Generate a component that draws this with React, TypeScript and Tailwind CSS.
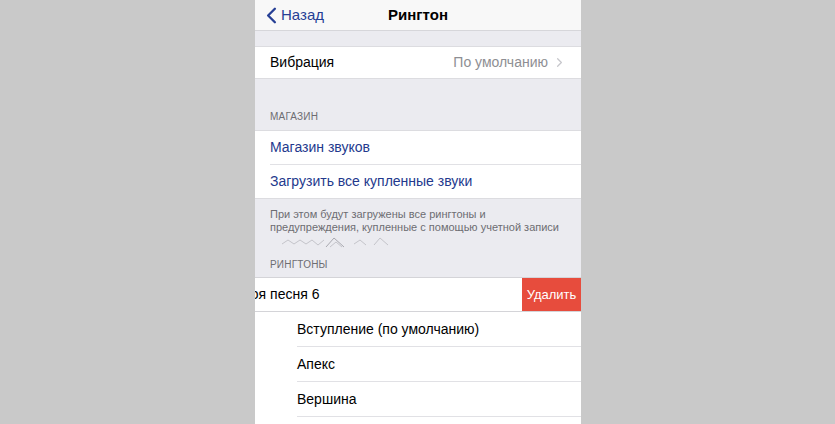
import { ChevronLeft, ChevronRight } from "lucide-react";

const ringtones = ["Вступление (по умолчанию)", "Апекс", "Вершина"];

function Zigzag() {
  return (
    <svg width="110" height="14" viewBox="0 0 110 14" className="ml-[12px] mt-[1px]" fill="none" stroke="#c4c4ca" strokeWidth="1">
      <polyline points="0,9 6,5 12,9 18,5 24,9 30,5 36,10 42,5" />
      <polyline points="44,12 52,3 62,12" stroke="#a9a9b0" />
      <polyline points="48,12 54,7 60,12" />
      <polyline points="72,9 78,5 84,10" />
      <polyline points="92,10 98,3 106,10" />
    </svg>
  );
}

export default function App() {
  return (
    <div className="h-[424px] w-[835px] overflow-hidden bg-[#c9c9c9] pl-[255px] font-['Liberation_Sans',Arial,sans-serif]">
      <div className="flex h-full w-[326px] flex-col bg-[#ebebf0]">
        <header className="relative flex h-[31px] shrink-0 items-center justify-center border-b border-[#d6d6da] bg-[#f8f8f8]">
          <div className="absolute left-[3px] top-0 flex h-full items-center text-[#263f95]">
            <ChevronLeft size={27} strokeWidth={2.1} className="-mr-[4px]" />
            <span className="text-[15px]">Назад</span>
          </div>
          <span className="text-[15px] font-bold text-black">Рингтон</span>
        </header>

        <div className="h-[15px] shrink-0" />

        <div className="flex h-[33px] shrink-0 items-center justify-between border-y border-[#dcdce0] bg-white pl-[15px] pr-[14px] text-[14px]">
          <span className="text-black">Вибрация</span>
          <span className="flex items-center gap-[4px] text-[#8e8e93]">
            По умолчанию
            <ChevronRight size={15} strokeWidth={2} className="text-[#c7c7cc]" />
          </span>
        </div>

        <div className="flex h-[51px] shrink-0 items-end pb-[6px] pl-[15px] text-[10px] uppercase tracking-[0.2px] text-[#6d6d72]">
          Магазин
        </div>

        <div className="shrink-0 border-y border-[#dcdce0] bg-white text-[14px] text-[#23398d]">
          <div className="flex h-[33px] items-center pl-[15px]">Магазин звуков</div>
          <div className="ml-[15px] h-px bg-[#e1e1e5]" />
          <div className="flex h-[33px] items-center pl-[15px]">Загрузить все купленные звуки</div>
        </div>

        <div className="flex h-[78px] shrink-0 flex-col pl-[15px] pt-[9px] text-[#6d6d72]">
          <p className="text-[11px] leading-[13px]">
            При этом будут загружены все рингтоны и
            <br />
            предупреждения, купленные с помощью учетной записи
          </p>
          <Zigzag />
          <div className="mt-auto pb-[5px] text-[10px] uppercase tracking-[0.2px]">Рингтоны</div>
        </div>

        <div className="flex h-[35px] shrink-0 overflow-hidden border-y border-[#d4d4d8] bg-white text-[14px]">
          <div className="flex flex-1 items-center">
            <span className="-ml-[16px] whitespace-nowrap text-black">Моя песня 6</span>
          </div>
          <div className="flex w-[59px] items-center justify-center bg-[#e74c3d] text-[13px] text-white">Удалить</div>
        </div>

        <div className="flex-1 bg-white pl-[42px] text-[14px] text-black">
          {ringtones.map((name) => (
            <div key={name} className="flex h-[35px] items-center border-b border-[#e1e1e5]">
              {name}
            </div>
          ))}
        </div>
      </div>
    </div>
  );
}
